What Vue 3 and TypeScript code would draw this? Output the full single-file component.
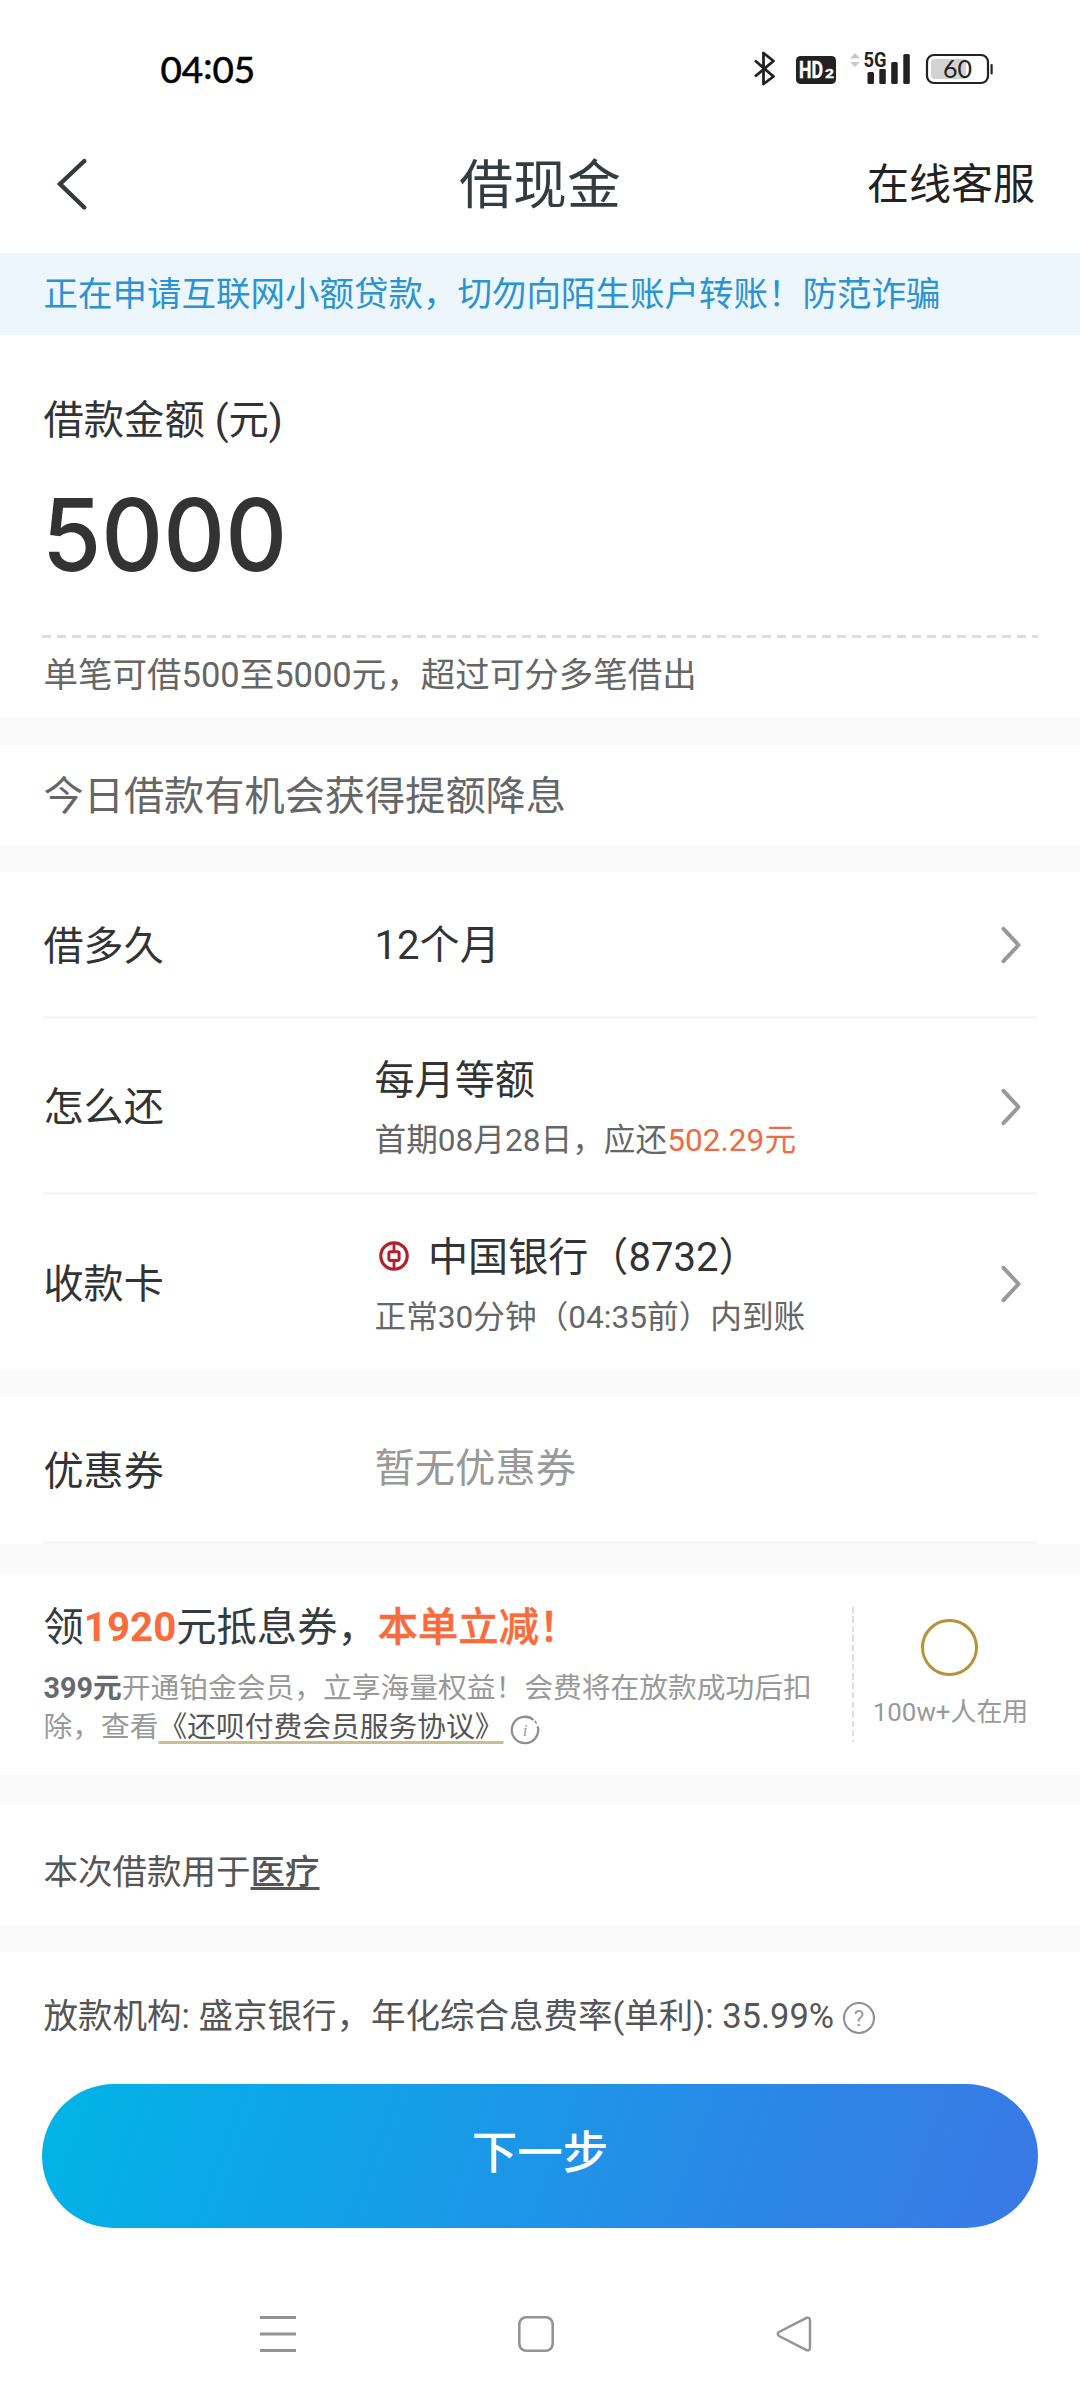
<script setup lang="ts">
interface Detail {
  label: string
  value: string
  bank?: boolean
  note?: string
  amount?: string
}

const details: Detail[] = [
  { label: '借多久', value: '12个月' },
  { label: '怎么还', value: '每月等额', note: '首期08月28日，应还', amount: '502.29元' },
  { label: '收款卡', value: '中国银行（8732）', bank: true, note: '正常30分钟（04:35前）内到账' },
]
</script>

<template>
  <div class="screen">
    <div class="status">
      <span class="time">04<i>:</i>05</span>
      <svg class="status-icons" width="250" height="44" viewBox="750 46 250 44">
        <path d="M755 60.5 773.5 76.5 763.5 84V53L773.5 61 755 76.5" fill="none" stroke="#222" stroke-width="2.8" stroke-linejoin="round" stroke-linecap="butt" />
        <rect x="796" y="56" width="40" height="28" rx="4.5" fill="#222" />
        <text x="799" y="78.2" class="hd" textLength="24" lengthAdjust="spacingAndGlyphs">HD</text>
        <text x="825" y="78.2" class="hd-sub" textLength="9" lengthAdjust="spacingAndGlyphs">2</text>
        <path d="M850 58.5 855 53 860 58.5ZM850 62 855 67 860 62Z" fill="#c9c9c9" />
        <rect x="867.5" y="72" width="6.5" height="12" rx="1.5" fill="#222" />
        <rect x="879.3" y="69" width="6.5" height="15" rx="1" fill="#222" />
        <rect x="891.2" y="62" width="6.5" height="22" rx="1.5" fill="#222" />
        <rect x="903.3" y="54" width="6.5" height="30" rx="1.5" fill="#222" />
        <text x="863.5" y="67" class="five" textLength="23" lengthAdjust="spacingAndGlyphs">5G</text>
        <rect x="927" y="55" width="61" height="28" rx="7" fill="#fff" stroke="#222" stroke-width="2.2" />
        <path d="M935 59H966V79H935Q931 79 931 75V63Q931 59 935 59Z" fill="#d2d2d2" />
        <rect x="990.5" y="64" width="2.2" height="10.5" rx="1" fill="#222" />
        <text x="957.5" y="78.3" text-anchor="middle" class="battery">60</text>
      </svg>
    </div>

    <header class="header">
      <svg class="back" width="36" height="56" viewBox="54 155 36 56">
        <path d="M84.3 160 60 183 84.3 206.5" fill="none" stroke="#353a3d" stroke-width="4.4" stroke-linecap="round" stroke-linejoin="miter" />
      </svg>
      <h1>借现金</h1>
      <span class="service">在线客服</span>
    </header>

    <div class="notice">正在申请互联网小额贷款，切勿向陌生账户转账！防范诈骗</div>

    <section class="amount">
      <div class="amount-label">借款金额 (元)</div>
      <div class="amount-value">5000</div>
      <div class="dash"></div>
      <div class="amount-tip">单笔可借500至5000元，超过可分多笔借出</div>
    </section>

    <section class="chance">今日借款有机会获得提额降息</section>

    <section class="details">
      <div v-for="d in details" :key="d.label" class="row" :class="{ tall: d.note }">
        <span class="label">{{ d.label }}</span>
        <div class="value">
          <div class="main">
            <svg v-if="d.bank" class="bank" width="30" height="32" viewBox="0 0 30 32">
              <g fill="none" stroke="#b3202c">
                <circle cx="15" cy="16" r="13.2" stroke-width="3.2" />
                <rect x="9.9" y="11.7" width="10.2" height="8.8" rx="1.8" stroke-width="3" />
                <path d="M15 3V11M15 21V29" stroke-width="2.8" />
              </g>
            </svg>
            <span>{{ d.value }}</span>
          </div>
          <div v-if="d.note" class="note">{{ d.note }}<em v-if="d.amount">{{ d.amount }}</em></div>
        </div>
        <svg class="chevron" width="22" height="40" viewBox="0 0 22 40">
          <path d="M3.5 3.8 18.5 20 3.5 36.2" fill="none" stroke="#999" stroke-width="4" stroke-linecap="round" stroke-linejoin="round" />
        </svg>
      </div>
    </section>

    <section class="coupon">
      <div class="row">
        <span class="label">优惠券</span>
        <span class="empty">暂无优惠券</span>
      </div>
    </section>

    <section class="promo">
      <div class="promo-text">
        <div class="promo-title">领<b>1920</b>元抵息券，<b class="hot">本单立减！</b></div>
        <div class="promo-desc">
          <b>399元</b>开通铂金会员，立享海量权益！会费将在放款成功后扣<br />除，查看<span class="agreement">《还呗付费会员服务协议》</span><svg class="info" width="30" height="30" viewBox="0 0 30 30">
            <path d="M23.5 4.9A13.2 13.2 0 1 0 27.7 11.4" fill="none" stroke="#8f8f8f" stroke-width="2.3" />
            <path d="M24.7 5.8 26.6 8.6" stroke="#999" stroke-width="1.8" />
            <text x="15" y="20.5" text-anchor="middle" class="info-i">i</text>
          </svg>
        </div>
      </div>
      <div class="promo-line"></div>
      <div class="promo-side">
        <div class="ring"></div>
        <div class="users">100w+人在用</div>
      </div>
    </section>

    <section class="purpose">本次借款用于<b>医疗</b></section>

    <section class="footer">
      <div class="lender">
        <span>放款机构: 盛京银行，年化综合息费率(单利): 35.99%</span>
        <svg class="help" width="34" height="34" viewBox="0 0 34 34">
          <circle cx="17" cy="17" r="15" fill="none" stroke="#8f8f8f" stroke-width="2.1" />
          <text x="17" y="25" text-anchor="middle" class="help-q">?</text>
        </svg>
      </div>
      <button class="next" type="button">下一步</button>
    </section>

    <nav class="nav">
      <svg width="36" height="38" viewBox="0 0 36 38">
        <path d="M0 2.5H36M0 19H36M0 35.5H36" stroke="#949494" stroke-width="3" />
      </svg>
      <svg width="36" height="38" viewBox="0 0 36 38">
        <rect x="1.3" y="2.2" width="33.4" height="33.6" rx="7" fill="none" stroke="#949494" stroke-width="2.6" />
      </svg>
      <svg width="36" height="38" viewBox="0 0 36 38">
        <path d="M30.5 2.8 3 17Q0.5 19 3 21L30.5 35.2Q34 36 34 32.5V5.5Q34 2 30.5 2.8Z" fill="none" stroke="#949494" stroke-width="2.5" stroke-linejoin="round" />
      </svg>
    </nav>
  </div>
</template>

<style>
body {
  margin: 0;
  background: #fff;
}
</style>

<style scoped>
.screen {
  width: 1080px;
  height: 2400px;
  overflow: hidden;
  background: #fafafa;
  color: #333;
  font-family: Roboto, 'Noto Sans CJK SC', sans-serif;
  font-size: 40.3px;
}
.screen * {
  box-sizing: border-box;
}
svg {
  display: block;
  flex: none;
}
section {
  background: #fff;
}
em {
  font-style: normal;
}
.status {
  display: flex;
  justify-content: space-between;
  height: 115px;
  padding: 46px 80px 0 160.5px;
  background: #fff;
}
.time {
  color: #000;
  font-family: Lato, sans-serif;
  font-size: 36.8px;
  line-height: 46px;
  -webkit-text-stroke: 0.6px #000;
}
.time i {
  position: relative;
  top: -4px;
  font-style: normal;
}
.hd {
  fill: #fff;
  stroke: #fff;
  stroke-width: 0.4px;
  font: bold 23px Roboto, sans-serif;
}
.hd-sub {
  fill: #fff;
  stroke: #fff;
  stroke-width: 0.4px;
  font: bold 13.5px Roboto, sans-serif;
}
.five {
  fill: #222;
  stroke: #fff;
  stroke-width: 3px;
  paint-order: stroke;
  font: bold 21px Roboto, sans-serif;
}
.battery {
  fill: #222;
  font: 25px Lato, sans-serif;
}
.header {
  display: grid;
  grid-template-columns: 1fr auto 1fr;
  align-items: center;
  height: 138px;
  padding: 0 45px 0 54px;
  background: #fff;
}
.header h1 {
  margin: 4px 0 0 -9px;
  color: #353c40;
  font-size: 53.8px;
  font-weight: 400;
  line-height: 70px;
}
.service {
  margin-top: 2px;
  justify-self: end;
  color: #222;
  font-size: 42px;
  line-height: 60px;
}
.notice {
  height: 82px;
  padding-left: 43.5px;
  background: #edf6fd;
  color: #2b93d3;
  font-size: 34.5px;
  line-height: 82px;
}
.amount {
  height: 382px;
  margin-bottom: 28px;
  padding: 56px 42px 0;
}
.amount-label {
  height: 60px;
  padding-left: 1.5px;
  font-size: 40.3px;
  line-height: 60px;
}
.amount-value {
  height: 184px;
  padding: 23px 0 0;
  font-family: Inter, sans-serif;
  font-size: 101px;
  font-weight: 500;
  line-height: 120px;
  transform: scaleX(0.95);
  transform-origin: left;
}
.dash {
  height: 3px;
  background: repeating-linear-gradient(90deg, #ddd 0 9px, transparent 9px 15px);
}
.amount-tip {
  padding: 7px 0 0 1.5px;
  color: #666;
  font-size: 34.5px;
  line-height: 60px;
}
.chance {
  height: 100px;
  margin-bottom: 27px;
  padding-left: 43.5px;
  color: #666;
  font-size: 40.2px;
  line-height: 103px;
}
.details {
  height: 498px;
  margin-bottom: 27px;
  padding: 0 42px;
}
.row {
  display: flex;
  align-items: center;
  height: 147px;
  border-bottom: 3px solid #f7f7f7;
  font-size: 40.1px;
}
.row.tall {
  height: 176px;
}
.details .row:last-child {
  height: 175px;
  border-bottom: 0;
}
.label {
  flex: none;
  width: 332.5px;
  padding: 5px 0 0 1.5px;
  line-height: 60px;
}
.value {
  flex: 1;
  padding-top: 4px;
}
.tall .value {
  padding-top: 11px;
}
.main {
  display: flex;
  align-items: center;
  height: 60px;
  line-height: 60px;
}
.bank {
  margin: -4px 19px 0 4.5px;
}
.note {
  height: 60px;
  color: #666;
  font-size: 31.65px;
  line-height: 60px;
}
.note em {
  color: #ee6c45;
}
.chevron {
  margin: 2px 16px 0 0;
}
.coupon {
  height: 147px;
  margin-bottom: 30px;
  padding: 0 42px;
}
.coupon .label {
  padding-top: 5px;
}
.empty {
  margin-top: -1px;
  color: #999;
  font-size: 40.3px;
  line-height: 60px;
}
.promo {
  display: flex;
  height: 201px;
  margin-bottom: 30px;
  padding-left: 43.5px;
}
.promo-text {
  width: 808px;
  padding-top: 24px;
}
.promo-title {
  height: 60px;
  color: #353c40;
  line-height: 60px;
  white-space: nowrap;
}
.promo-title b {
  color: #f96a3d;
}
.promo-title .hot {
  font-weight: 500;
  -webkit-text-stroke: 0.5px #f96a3d;
}
.promo-desc {
  padding-top: 11px;
  color: #999;
  font-size: 28.75px;
  line-height: 39px;
  white-space: nowrap;
}
.promo-desc b {
  color: #666a70;
}
.agreement {
  color: #555;
  text-decoration: underline;
  text-decoration-color: #cabf8c;
  text-decoration-thickness: 3px;
  text-underline-offset: 4px;
}
.info {
  display: inline-block;
  margin-left: 6px;
  vertical-align: -8px;
}
.info-i {
  fill: #999;
  font: italic 17px 'Liberation Serif', serif;
}
.promo-line {
  width: 2px;
  height: 135px;
  margin-top: 33px;
  background: repeating-linear-gradient(180deg, #dedee2 0 6px, transparent 6px 9.5px);
}
.promo-side {
  display: flex;
  flex-direction: column;
  align-items: center;
  width: 194px;
  padding-top: 45px;
}
.ring {
  width: 57px;
  height: 57px;
  margin-right: 2px;
  border: 3px solid #b5923d;
  border-radius: 50%;
}
.users {
  margin-top: 16px;
  color: #999;
  font-size: 25.9px;
  line-height: 40px;
}
.purpose {
  height: 120px;
  margin-bottom: 27px;
  padding-left: 43.5px;
  color: #555;
  font-size: 34.5px;
  line-height: 134px;
}
.purpose b {
  font-weight: 500;
  text-decoration: underline;
  text-decoration-thickness: 3px;
  text-underline-offset: 3px;
}
.footer {
  height: 296px;
  padding: 0 42px;
}
.lender {
  display: flex;
  align-items: center;
  height: 132px;
  padding: 0 0 6px 1.5px;
  color: #555;
  font-size: 34.5px;
}
.lender > span {
  margin-top: -4px;
}
.help {
  margin: 5px 0 0 8px;
}
.help-q {
  fill: #999;
  font: 22px Roboto, sans-serif;
}
.next {
  display: block;
  width: 996px;
  height: 144px;
  padding: 0 0 14px;
  border: 0;
  border-radius: 72px;
  background: linear-gradient(110deg, #00b4e6, #149fe8 35%, #2a88e6 70%, #3b78e6);
  color: #fff;
  font-family: inherit;
  font-size: 45.5px;
  font-weight: 500;
}
.nav {
  display: flex;
  justify-content: space-between;
  align-items: flex-start;
  height: 152px;
  padding: 67px 268px 0 260px;
  background: #fff;
}
</style>
